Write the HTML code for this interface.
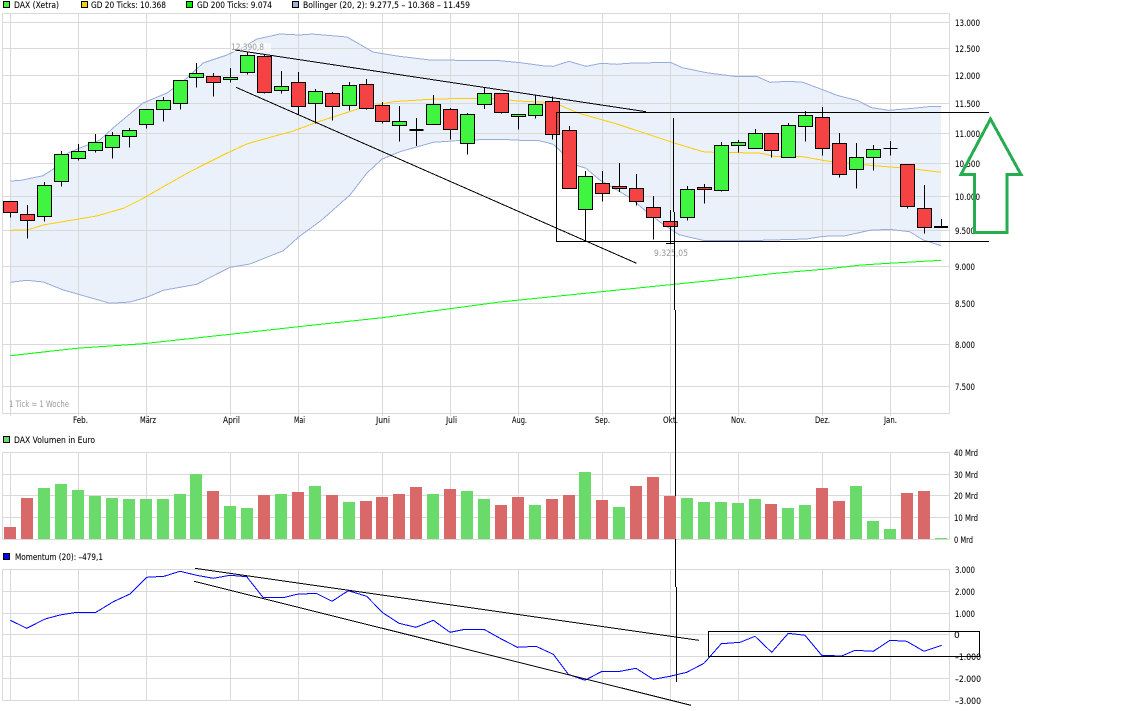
<!DOCTYPE html>
<html><head><meta charset="utf-8"><title>DAX Chart</title>
<style>
html,body{margin:0;padding:0;background:#fff;width:1146px;height:711px;overflow:hidden}
svg{display:block}
text{font-family:"DejaVu Sans","Liberation Sans",sans-serif;font-size:9px;fill:#000;stroke:#000;stroke-width:.2;stroke-opacity:.35}
text.m{fill:#999;stroke:none}
.g{fill:#3ff53f;stroke:#000}
.r{fill:#f54343;stroke:#000}
.k{fill:none;stroke:#000}
</style></head><body>
<svg width="1146" height="711" viewBox="0 0 1146 711" xmlns="http://www.w3.org/2000/svg" shape-rendering="crispEdges">
<!-- bollinger fill -->
<path fill="#eaf1fb" stroke="none" d="M10.5 181L20 180.5 43 175.7 55 168 68 153 80 148 100 140 113 128 143 103 167 93 187 78 203 63 227 55 240 49 257 39 280 34 300 35 312 34 347 37 373 52 397 56 430 60 500 60.7 520.6 62.7 544.7 66 553.3 66.3 568.8 61.3 586 66.3 601.5 63.3 617 64.3 627.3 63.3 670.3 62.3 682.4 67.7 706.5 72.7 734 76.3 756.4 76.3 770 82.3 789 81.3 802.8 82.3 820 88.7 837 95.3 857.9 100.7 871.6 107.7 888.9 110.3 913 108.3 931.9 106.3 941.2 106.3 941.2 245.7 923.3 240 909.5 231.7 888.9 229.3 869.9 230.3 844 236 823.5 236.3 806.3 239 761.5 240.3 703 240.3 679 234.7 661.7 223.3 644.5 210 630.8 198.3 617 190 599.8 180 586 168.3 575.7 165 553.3 144.3 537.9 140.3 520.6 140.3 500 139.3 466.7 140 433.3 142.3 400 151.7 381.7 159.3 366.7 173.3 350 195 321.7 220 298.3 237.3 283.3 250.7 250 264 230 267.3 196.7 284.3 163.3 290.3 146.7 297.3 130 302 110 303.3 80 294.7 63.3 290 43.3 282 26.7 280.3 10.5 282.3Z"/>
<!-- grid -->
<path fill="none" stroke="#d9d9d9" d="M2.5 13.5H949.5M2.5 22.5H949.5M2.5 48.5H949.5M2.5 75.5H949.5M2.5 103.5H949.5M2.5 133.5H949.5M2.5 163.5H949.5M2.5 196.5H949.5M2.5 230.5H949.5M2.5 266.5H949.5M2.5 303.5H949.5M2.5 344.5H949.5M2.5 386.5H949.5M2.5 413.5H949.5
M2.5 13.5V413.5M10.5 13.5V416M78.5 13.5V416M146.5 13.5V416M230.5 13.5V416M298.5 13.5V416M382.5 13.5V416M450.5 13.5V416M518.5 13.5V416M602.5 13.5V416M670.5 13.5V416M738.5 13.5V416M822.5 13.5V416M890.5 13.5V416M949.5 13.5V413.5
M2.5 452.5H949.5M2.5 474.5H949.5M2.5 495.5H949.5M2.5 517.5H949.5M2.5 539.5H949.5
M2.5 452.5V539.5M10.5 452.5V539.5M78.5 452.5V539.5M146.5 452.5V539.5M230.5 452.5V539.5M298.5 452.5V539.5M382.5 452.5V539.5M450.5 452.5V539.5M518.5 452.5V539.5M602.5 452.5V539.5M670.5 452.5V539.5M738.5 452.5V539.5M822.5 452.5V539.5M890.5 452.5V539.5M949.5 452.5V539.5
M2.5 569.5H949.5M2.5 591.5H949.5M2.5 613.5H949.5M2.5 634.5H949.5M2.5 656.5H949.5M2.5 678.5H949.5M2.5 700.5H949.5
M2.5 569.5V700.5M10.5 569.5V700.5M78.5 569.5V700.5M146.5 569.5V700.5M230.5 569.5V700.5M298.5 569.5V700.5M382.5 569.5V700.5M450.5 569.5V700.5M518.5 569.5V700.5M602.5 569.5V700.5M670.5 569.5V700.5M738.5 569.5V700.5M822.5 569.5V700.5M890.5 569.5V700.5M949.5 569.5V700.5"/>
<!-- bollinger lines -->
<path fill="none" stroke="#97acdb" d="M10.5 181L20 180.5 43 175.7 55 168 68 153 80 148 100 140 113 128 143 103 167 93 187 78 203 63 227 55 240 49 257 39 280 34 300 35 312 34 347 37 373 52 397 56 430 60 500 60.7 520.6 62.7 544.7 66 553.3 66.3 568.8 61.3 586 66.3 601.5 63.3 617 64.3 627.3 63.3 670.3 62.3 682.4 67.7 706.5 72.7 734 76.3 756.4 76.3 770 82.3 789 81.3 802.8 82.3 820 88.7 837 95.3 857.9 100.7 871.6 107.7 888.9 110.3 913 108.3 931.9 106.3 941.2 106.3"/>
<path fill="none" stroke="#97acdb" d="M941.2 245.7L923.3 240 909.5 231.7 888.9 229.3 869.9 230.3 844 236 823.5 236.3 806.3 239 761.5 240.3 703 240.3 679 234.7 661.7 223.3 644.5 210 630.8 198.3 617 190 599.8 180 586 168.3 575.7 165 553.3 144.3 537.9 140.3 520.6 140.3 500 139.3 466.7 140 433.3 142.3 400 151.7 381.7 159.3 366.7 173.3 350 195 321.7 220 298.3 237.3 283.3 250.7 250 264 230 267.3 196.7 284.3 163.3 290.3 146.7 297.3 130 302 110 303.3 80 294.7 63.3 290 43.3 282 26.7 280.3 10.5 282.3"/>
<!-- GD20 -->
<path fill="none" stroke="#fc0" d="M10.3 230.3L27.3 230 43.3 225 76.7 219.3 96.7 216 123.3 208.3 143.3 198.3 163.3 186.7 190 171.7 226.7 153.3 246.7 144 266.7 138.3 293.3 131 316.7 122.3 360 108.3 393.3 101.7 430 99.3 463.3 98.3 500 98.7 517.2 101 544.7 102.3 558.5 104.7 579 113.3 617 124 648 134.3 672 142.3 703 151.7 720 152.7 740.9 152.7 761.5 153.3 775.3 156.7 802.8 156.7 826.9 161 844 163.3 875 165.7 899 167.7 916.4 169.3 941.2 172.3"/>
<!-- GD200 -->
<path fill="none" stroke="#0f0" d="M10.3 355.7L76.7 348.3 143.3 343.7 230 334.3 298.3 326.7 382.3 317.7 450 308.7 500 302 716.8 280 775.3 273.3 823.5 269.3 861.3 265 888.9 263.3 941.2 260.3"/>
<!-- wicks -->
<path class="k" d="M10.5 201.5V217.5M27.5 205V238.5M44.5 182V221.5M61.5 151V186.5M78.5 144V160.5M95.5 134V152.5M112.5 132V158.5M129.5 128V147.5M146.5 109V128.5M163.5 97V121.5M180.5 80V109.5M196.5 63V87.5M213.5 73V96.5M230.5 68V82.5M247.5 52V74.5M264.5 54V93.5M281.5 71V93.5M298.5 72V114.5M315.5 89V123.5M332.5 92V120.5M349.5 82V110.5M366.5 79V109.5M382.5 102V123.5M399.5 106V141.5M416.5 118V146M433.5 95V124.5M450.5 108V139.5M467.5 113V154.5M484.5 88V109M501.5 93V113.5M518.5 114V129.5M535.5 95V118.5M552.5 96.5V139.5M569.5 126V188.5M585.5 171V240.5M602.5 171V201.5M619.5 163V192M636.5 174V205.5M653.5 196V239.5M670.5 210V243M666 243.5H675M687.5 186V220.5M704.5 184V203.5M721.5 142V191.5M738.5 140V152.5M755.5 129V148.5M771.5 133V157.5M788.5 123V157.5M805.5 111V141.5M822.5 107V155.5M839.5 133V177.5M856.5 143V188.5M873.5 145V170.5M890.5 141V155.5M883.5 148.5H897.5M907.5 164V208.5M924.5 185V233.5M941.5 219V227"/>
<!-- dojis -->
<rect x="409.5" y="129" width="14" height="2" fill="#000"/>
<rect x="934" y="226" width="14" height="2" fill="#000"/>
<!-- green bodies -->
<g class="g">
<rect x="37.5" y="185.5" width="14" height="31"/><rect x="54.5" y="154.5" width="14" height="27"/><rect x="71.5" y="151.5" width="14" height="7"/><rect x="88.5" y="142.5" width="14" height="8"/><rect x="105.5" y="135.5" width="14" height="12"/><rect x="122.5" y="130.5" width="14" height="6"/><rect x="139.5" y="109.5" width="14" height="15"/><rect x="156.5" y="100.5" width="14" height="9"/><rect x="173.5" y="80.5" width="14" height="23"/><rect x="189.5" y="73.5" width="14" height="4"/><rect x="223.5" y="77.5" width="14" height="2"/><rect x="240.5" y="55.5" width="14" height="17"/><rect x="274.5" y="86.5" width="14" height="4"/><rect x="308.5" y="91.5" width="14" height="12"/><rect x="342.5" y="85.5" width="14" height="20"/><rect x="392.5" y="121.5" width="14" height="4"/><rect x="426.5" y="104.5" width="14" height="20"/><rect x="460.5" y="114.5" width="14" height="29"/><rect x="477.5" y="93.5" width="14" height="11"/><rect x="511.5" y="114.5" width="14" height="2"/><rect x="528.5" y="104.5" width="14" height="11"/><rect x="578.5" y="176.5" width="14" height="33"/><rect x="680.5" y="189.5" width="14" height="28"/><rect x="714.5" y="145.5" width="14" height="45"/><rect x="731.5" y="142.5" width="14" height="3"/><rect x="748.5" y="133.5" width="14" height="15"/><rect x="781.5" y="125.5" width="14" height="32"/><rect x="798.5" y="115.5" width="14" height="11"/><rect x="849.5" y="157.5" width="14" height="12"/><rect x="866.5" y="149.5" width="14" height="8"/>
</g>
<!-- red bodies -->
<g class="r">
<rect x="3.5" y="201.5" width="14" height="11"/><rect x="20.5" y="214.5" width="14" height="6"/><rect x="206.5" y="76.5" width="14" height="6"/><rect x="257.5" y="56.5" width="14" height="36"/><rect x="291.5" y="82.5" width="14" height="24"/><rect x="325.5" y="93.5" width="14" height="13"/><rect x="359.5" y="84.5" width="14" height="24"/><rect x="375.5" y="105.5" width="14" height="16"/><rect x="443.5" y="109.5" width="14" height="20"/><rect x="494.5" y="93.5" width="14" height="19"/><rect x="545.5" y="101.5" width="14" height="33"/><rect x="562.5" y="130.5" width="14" height="58"/><rect x="595.5" y="183.5" width="14" height="10"/><rect x="612.5" y="186.5" width="14" height="2"/><rect x="629.5" y="188.5" width="14" height="13"/><rect x="646.5" y="207.5" width="14" height="10"/><rect x="663.5" y="221.5" width="14" height="5"/><rect x="697.5" y="187.5" width="14" height="2"/><rect x="764.5" y="133.5" width="14" height="17"/><rect x="815.5" y="117.5" width="14" height="31"/><rect x="832.5" y="143.5" width="14" height="31"/><rect x="900.5" y="164.5" width="14" height="42"/><rect x="917.5" y="208.5" width="14" height="19"/>
</g>
<!-- price annotations -->
<rect x="231" y="43" width="40" height="9" fill="#fff" fill-opacity=".6"/>
<path class="k" d="M235 50L646 111.7M236 87.3L636.6 263.3"/>
<text class="m" x="231" y="50" textLength="33" lengthAdjust="spacingAndGlyphs">12.390,8</text>
<text class="m" x="654" y="256" textLength="34" lengthAdjust="spacingAndGlyphs">9.325,05</text>
<text class="m" x="9" y="407" textLength="60" lengthAdjust="spacingAndGlyphs">1 Tick = 1 Woche</text>
<!-- rectangle & vertical -->
<path class="k" d="M989 112.5H556.5V241.5H989"/>
<path class="k" d="M673.5 118V212M674.5 212V310M675.5 310V587M676.5 587V682"/>
<!-- volume -->
<path fill="#d96868" d="M4 527h12V539h-12zM21 498h12V539h-12zM207 491h12V539h-12zM258 495h12V539h-12zM292 492h12V539h-12zM326 495h12V539h-12zM360 501h12V539h-12zM376 497h12V539h-12zM393 494h12V539h-12zM410 487h12V539h-12zM444 489h12V539h-12zM495 505h12V539h-12zM512 497h12V539h-12zM546 499h12V539h-12zM563 495h12V539h-12zM596 500h12V539h-12zM630 486h12V539h-12zM647 477h12V539h-12zM664 496h12V539h-12zM765 504h12V539h-12zM816 488h12V539h-12zM833 501h12V539h-12zM901 493h12V539h-12zM918 491h12V539h-12z"/>
<path fill="#6adb6a" d="M38 488h12V539h-12zM55 484h12V539h-12zM72 490h12V539h-12zM89 496h12V539h-12zM106 498h12V539h-12zM123 499h12V539h-12zM140 499h12V539h-12zM157 499h12V539h-12zM174 494h12V539h-12zM190 474h12V539h-12zM224 506h12V539h-12zM241 508h12V539h-12zM275 494h12V539h-12zM309 486h12V539h-12zM343 502h12V539h-12zM427 494h12V539h-12zM461 491h12V539h-12zM478 499h12V539h-12zM529 505h12V539h-12zM579 472h12V539h-12zM613 507h12V539h-12zM681 498h12V539h-12zM698 502h12V539h-12zM715 502h12V539h-12zM732 503h12V539h-12zM749 499h12V539h-12zM782 508h12V539h-12zM799 505h12V539h-12zM850 486h12V539h-12zM867 521h12V539h-12zM884 529h12V539h-12zM935 538h12V539h-12z"/>
<!-- momentum -->
<path fill="none" stroke="#00f" d="M10.3 620.3L26.7 628.3 45 619 60 615 76.7 612.3 96 612.3 113.3 601.7 130 594 146.7 577.3 164 576.3 180 571.3 196.7 575.3 213.3 578.3 230 575.3 246.7 576.7 263.3 597.7 283.3 597.7 296.7 594.3 316 593.3 332 601.3 348.3 590.7 366.7 596.3 382.7 612.7 399 623.3 416 627.3 433.3 620.3 450 632.3 465 629.3 484 629.3 500 638.3 517.3 647.3 536 646.3 553.3 654.3 568.3 674.3 585 680.3 602 671.3 620 671.3 636 668.3 653.3 679.3 670 676.3 686.7 672.3 704 663.3 721.3 643.7 740 642.3 755 636.3 771.7 652.3 788.3 633.3 805 635.3 821.7 655.3 841.7 656 855 650.3 873.3 651.3 890 640.3 906.7 641.3 924 651.3 941.7 645.3"/>
<path class="k" d="M195 568.3L699 640.3M194 581.3L691 705.3"/>
<rect x="708.5" y="631.5" width="271" height="25" class="k"/>
<!-- legends -->
<rect x="3.5" y="1.5" width="6" height="6" fill="#3ff53f" stroke="#000"/>
<text x="14" y="8" textLength="45" lengthAdjust="spacingAndGlyphs">DAX (Xetra)</text>
<rect x="81.5" y="1.5" width="6" height="6" fill="#fc0" stroke="#000"/>
<text x="91" y="8" textLength="75" lengthAdjust="spacingAndGlyphs">GD 20 Ticks: 10.368</text>
<rect x="186.5" y="1.5" width="6" height="6" fill="#0e0" stroke="#000"/>
<text x="197" y="8" textLength="75" lengthAdjust="spacingAndGlyphs">GD 200 Ticks: 9.074</text>
<rect x="292.5" y="1.5" width="6" height="6" fill="#9ab3dc" stroke="#000"/>
<text x="303" y="8" textLength="167" lengthAdjust="spacingAndGlyphs">Bollinger (20, 2): 9.277,5 – 10.368 – 11.459</text>
<rect x="3.5" y="436.5" width="6" height="6" fill="#6adb6a" stroke="#000"/>
<text x="14" y="443" textLength="81" lengthAdjust="spacingAndGlyphs">DAX Volumen in Euro</text>
<rect x="3.5" y="553.5" width="6" height="6" fill="#00f" stroke="#000"/>
<text x="15" y="560" textLength="88" lengthAdjust="spacingAndGlyphs">Momentum (20): –479,1</text>
<!-- months -->
<text x="73" y="423" textLength="15" lengthAdjust="spacingAndGlyphs">Feb.</text>
<text x="140" y="423" textLength="16" lengthAdjust="spacingAndGlyphs">März</text>
<text x="223" y="423" textLength="17" lengthAdjust="spacingAndGlyphs">April</text>
<text x="294" y="423" textLength="11" lengthAdjust="spacingAndGlyphs">Mai</text>
<text x="376" y="423" textLength="14" lengthAdjust="spacingAndGlyphs">Juni</text>
<text x="446" y="423" textLength="11" lengthAdjust="spacingAndGlyphs">Juli</text>
<text x="512" y="423" textLength="15" lengthAdjust="spacingAndGlyphs">Aug.</text>
<text x="595" y="423" textLength="15" lengthAdjust="spacingAndGlyphs">Sep.</text>
<text x="663" y="423" textLength="15" lengthAdjust="spacingAndGlyphs">Okt.</text>
<text x="731" y="423" textLength="15" lengthAdjust="spacingAndGlyphs">Nov.</text>
<text x="815" y="423" textLength="15" lengthAdjust="spacingAndGlyphs">Dez.</text>
<text x="884" y="423" textLength="13" lengthAdjust="spacingAndGlyphs">Jan.</text>
<!-- price axis -->
<text x="955" y="26" textLength="25" lengthAdjust="spacingAndGlyphs">13.000</text>
<text x="955" y="52" textLength="25" lengthAdjust="spacingAndGlyphs">12.500</text>
<text x="955" y="79" textLength="25" lengthAdjust="spacingAndGlyphs">12.000</text>
<text x="955" y="107" textLength="25" lengthAdjust="spacingAndGlyphs">11.500</text>
<text x="955" y="137" textLength="25" lengthAdjust="spacingAndGlyphs">11.000</text>
<text x="955" y="167" textLength="25" lengthAdjust="spacingAndGlyphs">10.500</text>
<text x="955" y="200" textLength="25" lengthAdjust="spacingAndGlyphs">10.000</text>
<text x="955" y="234" textLength="20" lengthAdjust="spacingAndGlyphs">9.500</text>
<text x="955" y="270" textLength="20" lengthAdjust="spacingAndGlyphs">9.000</text>
<text x="955" y="307" textLength="20" lengthAdjust="spacingAndGlyphs">8.500</text>
<text x="955" y="348" textLength="20" lengthAdjust="spacingAndGlyphs">8.000</text>
<text x="955" y="390" textLength="20" lengthAdjust="spacingAndGlyphs">7.500</text>
<!-- volume axis -->
<text x="954" y="456" textLength="24" lengthAdjust="spacingAndGlyphs">40 Mrd</text>
<text x="954" y="478" textLength="24" lengthAdjust="spacingAndGlyphs">30 Mrd</text>
<text x="954" y="499" textLength="24" lengthAdjust="spacingAndGlyphs">20 Mrd</text>
<text x="954" y="521" textLength="24" lengthAdjust="spacingAndGlyphs">10 Mrd</text>
<text x="954" y="543" textLength="19" lengthAdjust="spacingAndGlyphs">0 Mrd</text>
<!-- momentum axis -->
<text x="955" y="573" textLength="20" lengthAdjust="spacingAndGlyphs">3.000</text>
<text x="955" y="595" textLength="20" lengthAdjust="spacingAndGlyphs">2.000</text>
<text x="955" y="617" textLength="20" lengthAdjust="spacingAndGlyphs">1.000</text>
<text x="954" y="638">0</text>
<text x="955" y="660" textLength="26" lengthAdjust="spacingAndGlyphs">–1.000</text>
<text x="955" y="682" textLength="26" lengthAdjust="spacingAndGlyphs">–2.000</text>
<text x="955" y="704" textLength="26" lengthAdjust="spacingAndGlyphs">–3.000</text>
<!-- arrow -->
<path fill="none" stroke="#25ad4f" stroke-width="3" stroke-linejoin="miter" d="M990.5 119L961 174.5H974.5V232.5H1007V174.5H1021L990.5 119Z"/>
</svg>
</body></html>
